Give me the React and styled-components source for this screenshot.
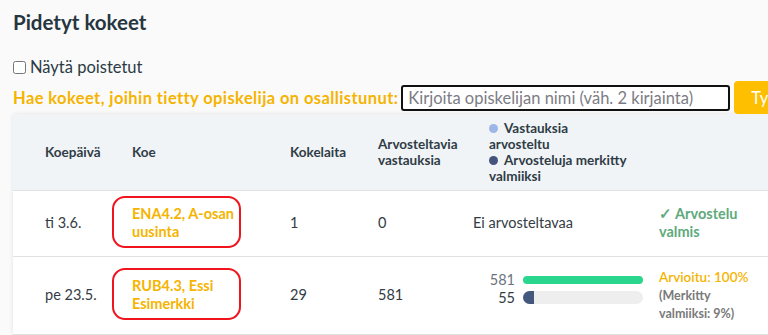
import styled, { createGlobalStyle } from "styled-components";

const GlobalStyle = createGlobalStyle`
  html, body {
    margin: 0;
    padding: 0;
    background: #fafafa;
    font-family: Lato, "Source Sans Pro", "Noto Sans", sans-serif;
    color: #333;
    overflow: hidden;
  }
`;

const Page = styled.div`
  padding: 0 0 0 13px;
  width: 900px;
`;

const Title = styled.h1`
  margin: 0;
  padding-top: 8px;
  font-size: 20.5px;
  line-height: 28px;
  font-weight: 700;
  color: #263640;
`;

const CheckRow = styled.label`
  display: flex;
  align-items: center;
  gap: 4px;
  margin-top: 20px;
  height: 22px;
  font-size: 16.5px;
  color: #2b3a44;
  input {
    margin: 0;
    width: 13px;
    height: 13px;
  }
`;

const SearchRow = styled.div`
  display: flex;
  align-items: center;
  white-space: nowrap;
  margin-top: 3px;
  height: 33px;
`;

const SearchLabel = styled.span`
  font-size: 16.5px;
  letter-spacing: 0.4px;
  font-weight: 700;
  color: #f5b400;
  margin-right: 3px;
`;

const SearchInput = styled.input`
  box-sizing: border-box;
  width: 329px;
  height: 26px;
  border: 2px solid #111;
  border-radius: 3px;
  padding: 0 5px;
  font-family: inherit;
  font-size: 16.5px;
  background: #fff;
  &::placeholder {
    color: #7c7c84;
  }
`;

const ClearButton = styled.button`
  margin-left: 4px;
  height: 33px;
  padding: 0 17px;
  border: none;
  border-radius: 4px;
  background: #fdbf00;
  color: #fff;
  font-family: inherit;
  font-size: 16.5px;
`;

const Card = styled.div`
  background: #fff;
  border-radius: 3px;
  box-shadow: 0 0 4px rgba(0, 0, 0, 0.1);
`;

const Table = styled.table`
  border-collapse: collapse;
  width: 100%;
  table-layout: fixed;
`;

const HeadRow = styled.tr`
  background: #f1f4f7;
  height: 76px;
  border-bottom: 1px solid #dfe1e3;
`;

const Th = styled.th`
  text-align: left;
  vertical-align: middle;
  padding: 0 0 0 ${(p) => p.$pl || 0}px;
  width: ${(p) => p.$w}px;
  font-size: 13.5px;
  line-height: 16px;
  font-weight: 700;
  color: #2f3c46;
`;

const Row = styled.tr`
  height: ${(p) => p.$h}px;
  border-bottom: 1px solid #dfe1e3;
`;

const Td = styled.td`
  vertical-align: middle;
  padding: 0 0 0 ${(p) => p.$pl || 0}px;
  font-size: 14.5px;
  line-height: 18px;
  color: #333c44;
`;

const ExamLink = styled.a`
  position: relative;
  display: block;
  width: 106px;
  color: #f5b400;
  font-weight: 700;
  font-size: 14.5px;
  line-height: 18px;
  text-decoration: none;
  &::after {
    content: "";
    position: absolute;
    top: -9px;
    bottom: -7px;
    left: -20px;
    right: -3px;
    border: 2px solid #f0141e;
    border-radius: 13px;
  }
`;

const Legend = styled.div`
  display: flex;
  flex-direction: column;
  max-width: 140px;
`;

const LegendItem = styled.span`
  &::before {
    content: "";
    display: inline-block;
    width: 9px;
    height: 9px;
    border-radius: 50%;
    margin-right: 6px;
    vertical-align: 0;
    background: ${(p) => p.$color};
  }
`;

const Bars = styled.div`
  display: grid;
  grid-template-columns: 42px 120px;
  column-gap: 8px;
  align-items: center;
  margin-bottom: 13px;
`;

const BarNum = styled.span`
  text-align: right;
  font-size: 14.5px;
  line-height: 18px;
  color: ${(p) => p.$color};
`;

const Track = styled.div`
  height: ${(p) => p.$h}px;
  border-radius: ${(p) => p.$h / 2}px;
  background: #eee;
  overflow: hidden;
`;

const Fill = styled.div`
  height: 100%;
  background: ${(p) => p.$color};
`;

const Done = styled.span`
  color: #5faa7c;
  font-weight: 700;
  font-size: 14.5px;
`;

const Graded = styled.div`
  color: #f5b400;
  font-size: 13.5px;
  line-height: 20px;
  font-weight: 600;
`;

const Marked = styled.div`
  color: #7a7a7a;
  font-size: 12.5px;
  line-height: 18px;
  font-weight: 700;
`;

export default function App() {
  return (
    <>
      <GlobalStyle />
      <Page>
        <Title>Pidetyt kokeet</Title>
        <CheckRow>
          <input type="checkbox" />
          Näytä poistetut
        </CheckRow>
        <SearchRow>
          <SearchLabel>Hae kokeet, joihin tietty opiskelija on osallistunut:</SearchLabel>
          <SearchInput placeholder="Kirjoita opiskelijan nimi (väh. 2 kirjainta)" />
          <ClearButton>Tyhjennä</ClearButton>
        </SearchRow>
        <Card>
          <Table>
            <thead>
              <HeadRow>
                <Th $w={87} $pl={32}>Koepäivä</Th>
                <Th $w={158}>Koe</Th>
                <Th $w={88}>Kokelaita</Th>
                <Th $w={95}>
                  Arvosteltavia
                  <br />
                  vastauksia
                </Th>
                <Th $w={170} $pl={16}>
                  <Legend>
                    <LegendItem $color="#9db6e6">Vastauksia arvosteltu</LegendItem>
                    <LegendItem $color="#44547a">Arvosteluja merkitty valmiiksi</LegendItem>
                  </Legend>
                </Th>
                <Th $w={100}></Th>
                <Th></Th>
              </HeadRow>
            </thead>
            <tbody>
              <Row $h={66}>
                <Td $pl={32}>ti 3.6.</Td>
                <Td>
                  <ExamLink href="#">ENA4.2, A-osan uusinta</ExamLink>
                </Td>
                <Td>1</Td>
                <Td>0</Td>
                <Td>Ei arvosteltavaa</Td>
                <Td>
                  <Done>✓ Arvostelu valmis</Done>
                </Td>
                <Td></Td>
              </Row>
              <Row $h={78}>
                <Td $pl={32}>pe 23.5.</Td>
                <Td>
                  <ExamLink href="#">RUB4.3, Essi Esimerkki</ExamLink>
                </Td>
                <Td>29</Td>
                <Td>581</Td>
                <Td>
                  <Bars>
                    <BarNum $color="#6b747c">581</BarNum>
                    <Track $h={8}>
                      <Fill $color="#2bd68f" style={{ width: "100%" }} />
                    </Track>
                    <BarNum $color="#333c44">55</BarNum>
                    <Track $h={13}>
                      <Fill $color="#44587d" style={{ width: `${(55 / 581) * 100}%` }} />
                    </Track>
                  </Bars>
                </Td>
                <Td>
                  <Graded>Arvioitu: 100%</Graded>
                  <Marked>(Merkitty valmiiksi: 9%)</Marked>
                </Td>
                <Td></Td>
              </Row>
            </tbody>
          </Table>
        </Card>
      </Page>
    </>
  );
}
